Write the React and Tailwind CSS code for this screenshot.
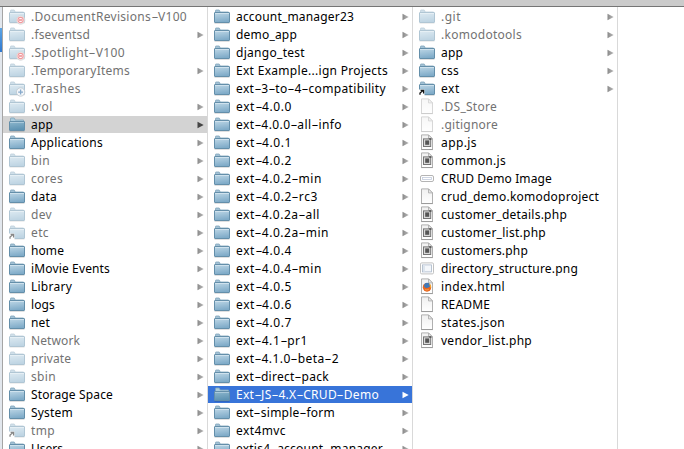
import { useLayoutEffect, useRef } from "react";

// Each entry: [name, label width, icon kind, flags]
// flags: d = dimmed, a = has arrow, s = selected
const ROOT = [
  [".DocumentRevisions-V100", 155, "denied", "d"],
  [".fseventsd", 58, "folder", "da"],
  [".Spotlight-V100", 93, "denied", "d"],
  [".TemporaryItems", 98, "folder", "da"],
  [".Trashes", 49, "drop", "d"],
  [".vol", 21, "folder", "da"],
  ["app", 21, "open", "as"],
  ["Applications", 71, "folder", "a"],
  ["bin", 18, "folder", "da"],
  ["cores", 31, "folder", "da"],
  ["data", 25, "folder", "a"],
  ["dev", 20, "folder", "da"],
  ["etc", 17, "alias", "da"],
  ["home", 32, "folder", "a"],
  ["iMovie Events", 78, "folder", "a"],
  ["Library", 40, "folder", "a"],
  ["logs", 23, "folder", "a"],
  ["net", 18, "folder", "a"],
  ["Network", 48, "folder", "da"],
  ["private", 39, "folder", "da"],
  ["sbin", 24, "folder", "da"],
  ["Storage Space", 81, "folder", "a"],
  ["System", 41, "folder", "a"],
  ["tmp", 23, "alias", "da"],
  ["Users", 31, "folder", "a"],
];

const APP = [
  ["account_manager23", 117, "folder", "a"],
  ["demo_app", 60, "folder", "a"],
  ["django_test", 68, "folder", "a"],
  ["Ext Example...ign Projects", 151, "folder", "a"],
  ["ext-3-to-4-compatibility", 149, "folder", "a"],
  ["ext-4.0.0", 55, "folder", "a"],
  ["ext-4.0.0-all-info", 105, "folder", "a"],
  ["ext-4.0.1", 55, "folder", "a"],
  ["ext-4.0.2", 55, "folder", "a"],
  ["ext-4.0.2-min", 85, "folder", "a"],
  ["ext-4.0.2-rc3", 81, "folder", "a"],
  ["ext-4.0.2a-all", 83, "folder", "a"],
  ["ext-4.0.2a-min", 92, "folder", "a"],
  ["ext-4.0.4", 55, "folder", "a"],
  ["ext-4.0.4-min", 85, "folder", "a"],
  ["ext-4.0.5", 55, "folder", "a"],
  ["ext-4.0.6", 55, "folder", "a"],
  ["ext-4.0.7", 55, "folder", "a"],
  ["ext-4.1-pr1", 71, "folder", "a"],
  ["ext-4.1.0-beta-2", 102, "folder", "a"],
  ["ext-direct-pack", 92, "folder", "a"],
  ["Ext-JS-4.X-CRUD-Demo", 142, "open", "as"],
  ["ext-simple-form", 98, "folder", "a"],
  ["ext4mvc", 49, "folder", "a"],
  ["extjs4-account-manager", 146, "folder", "a"],
];

const PROJECT = [
  [".git", 19, "folder", "da"],
  [".komodotools", 80, "folder", "da"],
  ["app", 21, "folder", "a"],
  ["css", 17, "folder", "a"],
  ["ext", 18, "alias", "a"],
  [".DS_Store", 55, "doc", "d"],
  [".gitignore", 56, "doc", "d"],
  ["app.js", 35, "code", ""],
  ["common.js", 64, "code", ""],
  ["CRUD Demo Image", 110, "strip", ""],
  ["crud_demo.komodoproject", 157, "doc", ""],
  ["customer_details.php", 125, "code", ""],
  ["customer_list.php", 104, "code", ""],
  ["customers.php", 86, "code", ""],
  ["directory_structure.png", 136, "image", ""],
  ["index.html", 63, "web", ""],
  ["README", 48, "doc", ""],
  ["states.json", 63, "doc", ""],
  ["vendor_list.php", 90, "code", ""],
];

function FolderShape({ open }) {
  return (
    <>
      <path d="M1.5 5V2.5Q1.5 2 2 2H5Q5.5 2 5.8 3L6.1 4H14.5V6H1.5Z" fill={open ? "#a9cbdd" : "#a3c2d6"} stroke="#7fa3ba" strokeWidth="0.8" />
      <rect x="0.5" y={open ? 5.5 : 4.5} width="15" height={open ? 9 : 10} rx="0.4" fill={open ? "url(#openFace)" : "url(#face)"} stroke="#648faa" />
      <path d={open ? "M1 6.5H15" : "M1 5.5H15"} stroke="#d5e6f0" strokeOpacity={open ? 0.6 : 1} strokeWidth="0.8" />
      <path d="M0.5 15.5H15.5" stroke="#000" strokeOpacity="0.12" />
    </>
  );
}

function PageShape() {
  return (
    <>
      <path d="M2.5 0.9H9.5L13.5 4.9V15.5H2.5Z" fill="url(#page)" stroke="#b0b0b0" />
      <path d="M9.5 0.9V4.9H13.5Z" fill="#e9e9e9" stroke="#a8a8a8" strokeWidth="0.8" />
      <path d="M2 15.6H14" stroke="#8c8c8c" strokeWidth="0.6" />
    </>
  );
}

function Icon({ kind, dim }) {
  const folder = ["folder", "open", "alias", "denied", "drop"].includes(kind);
  return (
    <svg width="16" height="17" viewBox="0 0 16 17" className="shrink-0 overflow-visible">
      <g opacity={dim ? 0.5 : 1}>
        {folder && <FolderShape open={kind === "open"} />}
        {(kind === "doc" || kind === "code" || kind === "web") && <PageShape />}
        {kind === "alias" && (
          <>
            <path d="M0 9.5H5.5V16H0Z" fill="#fff" />
            <path d="M1 14.8V13L3.8 10.8M1.6 10.4H4.6V13.4" fill="none" stroke="#111" strokeWidth="1.3" />
          </>
        )}
        {kind === "code" && (
          <>
            <rect x="4.5" y="4.9" width="7.2" height="7.6" fill="#d9d9d9" stroke="#757575" />
            <rect x="6.2" y="6.4" width="4" height="4.4" fill="#555" />
            <path d="M10.2 5H12.4" stroke="#444" strokeWidth="1.2" />
          </>
        )}
        {kind === "web" && (
          <>
            <circle cx="8" cy="9.2" r="4.2" fill="#e8752b" />
            <circle cx="8.1" cy="7.8" r="3" fill="#3f78b8" />
            <path d="M4.2 6.5Q4.8 9.4 7 10Q9 10.4 12.1 7.7Q12.4 13.2 8 13.4Q3.6 13.2 4.2 6.5Z" fill="#e8641f" />
            <path d="M10.1 5.3Q12.6 7 11.7 10.6Q10.9 9 10.1 5.3Z" fill="#f6b52f" />
            <path d="M5.6 10.7Q8 12.2 10.4 10.6Q9.6 12.6 7.9 12.6Q6.3 12.6 5.6 10.7Z" fill="#f59a45" />
          </>
        )}
        {kind === "strip" && (
          <>
            <rect x="1.5" y="5.5" width="13" height="6" rx="1.5" fill="#fff" stroke="#b4b4b4" />
            <rect x="3.5" y="7.5" width="9" height="2" fill="#fff" stroke="#c3cbdc" strokeWidth="0.8" />
          </>
        )}
        {kind === "image" && (
          <>
            <rect x="1.5" y="2.9" width="13" height="11" rx="1.2" fill="#fff" stroke="#c0c0c0" />
            <rect x="3.5" y="4.9" width="9" height="7" fill="#f4f7fb" stroke="#a9b6c8" strokeWidth="0.8" />
            <path d="M4 5.4H6V11.4H4Z" fill="#dde5ee" />
          </>
        )}
      </g>
      {kind === "denied" && (
        <>
          <circle cx="11.6" cy="12" r="4.2" fill="#f6eeee" stroke="#cfd3d6" strokeWidth="0.8" />
          <circle cx="11.6" cy="12" r="2.6" fill="#fff" stroke="#f09a9e" strokeWidth="1.1" />
          <path d="M10 12H13.2" stroke="#e9777d" strokeWidth="1.3" />
        </>
      )}
      {kind === "drop" && (
        <>
          <circle cx="11.6" cy="12" r="4.2" fill="#f3f6f9" stroke="#bcc6ce" strokeWidth="0.8" />
          <path d="M9.2 12.2H14M11.6 9.4V14.6" stroke="#86a9cb" strokeWidth="1.3" />
        </>
      )}
    </svg>
  );
}

// Hyphens are drawn wide, about the length of a digit.
function withWideHyphens(text) {
  return text.split(/(-)/).map((part, i) =>
    part === "-" ? (
      <span key={i} className="mx-[1.5px] inline-block scale-x-[1.8] tracking-normal">
        -
      </span>
    ) : (
      part
    )
  );
}

function Label({ text, width }) {
  const ref = useRef(null);
  // Spread the glyphs so that the label fills its measured width.
  useLayoutEffect(() => {
    const el = ref.current;
    el.style.letterSpacing = "0px";
    const natural = el.getBoundingClientRect().width;
    const glyphs = text.replaceAll("-", "").length;
    el.style.letterSpacing = `${(width + 1 - natural) / glyphs}px`;
  }, [text, width]);
  return (
    <span ref={ref} className="ml-1.5 shrink-0 whitespace-pre leading-[17px]">
      {withWideHyphens(text)}
    </span>
  );
}

function Row({ item, focused }) {
  const [name, width, kind, flags] = item;
  const dim = flags.includes("d");
  const selected = flags.includes("s");
  const bg = selected ? (focused ? "bg-[#3874d9]" : "bg-[#d3d3d3]") : "";
  const color = dim ? "text-[#727272]" : selected && focused ? "text-white" : "text-black";
  const arrow = selected ? (focused ? "#ffffff" : "#454545") : "url(#arrow)";
  return (
    <div className={`mb-px flex h-[17px] shrink-0 items-center pl-1.5 pr-[3px] ${bg} ${color}`}>
      <Icon kind={kind} dim={dim} />
      <Label text={name} width={width} />
      {flags.includes("a") && (
        <svg width="7" height="8" viewBox="0 0 7 8" className="ml-auto shrink-0">
          <path d="M0.5 0.7L6.7 4L0.5 7.3Z" fill={arrow} />
        </svg>
      )}
    </div>
  );
}

function Column({ items, focused, className }) {
  return (
    <div className={`flex shrink-0 flex-col overflow-hidden border-r border-[#d9d9d9] pt-px ${className}`}>
      {items.map((item) => (
        <Row key={item[0]} item={item} focused={focused} />
      ))}
    </div>
  );
}

export default function App() {
  return (
    <div className="flex h-[449px] w-[684px] flex-col overflow-hidden bg-white font-['Noto_Sans','Open_Sans',sans-serif] text-[12px]">
      <svg width="0" height="0" className="absolute">
        <defs>
          <linearGradient id="face" x1="0" y1="0" x2="0.2" y2="1">
            <stop offset="0" stopColor="#bfd8e7" />
            <stop offset="1" stopColor="#7fabc8" />
          </linearGradient>
          <linearGradient id="openFace" x1="0" y1="0" x2="0.2" y2="1">
            <stop offset="0" stopColor="#8db7cd" />
            <stop offset="1" stopColor="#5e93b3" />
          </linearGradient>
          <linearGradient id="page" x1="0" y1="0" x2="0" y2="1">
            <stop offset="0" stopColor="#f0f0f0" />
            <stop offset="1" stopColor="#ffffff" />
          </linearGradient>
          <linearGradient id="arrow" x1="0" y1="0" x2="1" y2="0">
            <stop offset="0" stopColor="#8a8a8a" />
            <stop offset="1" stopColor="#b8b8b8" />
          </linearGradient>
        </defs>
      </svg>
      <div className="h-[7px] shrink-0 border-b border-[#757575] bg-[#cbcbcb]" />
      <div className="flex min-h-0 flex-1">
        <div className="flex w-[3px] shrink-0 flex-col border-r border-[#a5a5a5] bg-[#e2e7ed]">
          <div className="mt-[21px] h-6 bg-linear-to-b from-[#5ca5e5] to-[#2f78cf]" />
        </div>
        <Column items={ROOT} className="w-[205px]" />
        <Column items={APP} focused className="w-[205px]" />
        <Column items={PROJECT} className="w-[205px]" />
      </div>
    </div>
  );
}
